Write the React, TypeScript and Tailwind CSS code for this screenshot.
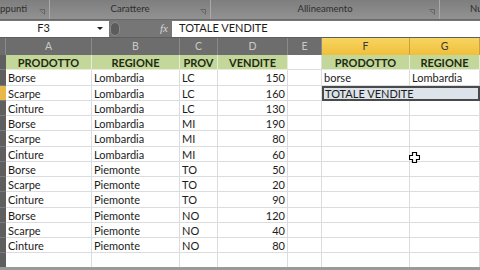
import React from 'react'

const rows: [string, string, string, number][] = [
  ['Borse', 'Lombardia', 'LC', 150],
  ['Scarpe', 'Lombardia', 'LC', 160],
  ['Cinture', 'Lombardia', 'LC', 130],
  ['Borse', 'Lombardia', 'MI', 190],
  ['Scarpe', 'Lombardia', 'MI', 80],
  ['Cinture', 'Lombardia', 'MI', 60],
  ['Borse', 'Piemonte', 'TO', 50],
  ['Scarpe', 'Piemonte', 'TO', 20],
  ['Cinture', 'Piemonte', 'TO', 90],
  ['Borse', 'Piemonte', 'NO', 120],
  ['Scarpe', 'Piemonte', 'NO', 40],
  ['Cinture', 'Piemonte', 'NO', 80],
]

const cols = 'grid grid-cols-[6px_86px_88px_38px_70px_34px_88px_70px]'
const cell = 'h-[15.25px] border-r border-b border-[#dadcdd] px-[2px] leading-[15px] whitespace-nowrap overflow-hidden'
const head = 'h-[15.25px] border-r border-b border-[#e6ecd8] bg-[#c4d79b] leading-[15px] font-bold text-center text-[#1e2a10] whitespace-nowrap overflow-hidden'

function Launcher() {
  return (
    <svg width="6" height="6" viewBox="0 0 6 6" className="opacity-70">
      <path d="M0.5 0.5h5v5" fill="none" stroke="#555" strokeWidth="1" />
      <path d="M1.5 1.5l3 3" stroke="#555" strokeWidth="1" />
    </svg>
  )
}

function RibbonGroup({ label, width, align = 'center' }: { label: string; width: number; align?: 'left' | 'center' }) {
  return (
    <div
      className="relative h-full flex items-center border-r border-[#a9a9a9] shrink-0"
      style={{ width }}
    >
      <span className={`flex-1 text-[9.5px] text-[#2e2e2e] ${align === 'left' ? 'text-left' : 'text-center'}`}>{label}</span>
      <span className="absolute right-[4px] bottom-[4px]">
        <Launcher />
      </span>
    </div>
  )
}

export default function App() {
  return (
    <div className="w-[480px] h-[270px] overflow-hidden bg-white flex flex-col" style={{ fontFamily: 'Lato, "Noto Sans", sans-serif' }}>
      {/* ribbon group labels */}
      <div className="h-[20px] shrink-0 flex bg-gradient-to-b from-[#7e7e7e] to-[#929292] border-b border-[#6a6a6a]">
        <RibbonGroup label="ppunti" width={50} align="left" />
        <RibbonGroup label="Carattere" width={161} />
        <RibbonGroup label="Allineamento" width={229} />
        <div className="flex-1 flex items-center pl-[30px] text-[9.5px] text-[#2e2e2e]">Nu</div>
      </div>

      {/* formula bar */}
      <div className="h-[18px] shrink-0 flex items-center bg-[#767676] border-b border-[#5e5e5e]">
        <div className="w-[109px] h-[16px] bg-white flex items-center relative">
          <span className="flex-1 text-center text-[11px] text-[#1a1a1a] pr-[22px]">F3</span>
          <span className="absolute right-[6px] top-[6px] w-0 h-0 border-l-[3px] border-r-[3px] border-t-[3px] border-l-transparent border-r-transparent border-t-[#222]" />
        </div>
        <div className="w-[10px] h-[14px] ml-[1px] rounded-full bg-[#5c5c5c] border border-[#8a8a8a]" />
        <div className="w-[52px] h-full flex items-center justify-end pr-[4px]">
          <span className="text-[11px] italic text-[#d8d8d8]" style={{ fontFamily: '"Liberation Serif", serif' }}>fx</span>
        </div>
        <div className="flex-1 h-[16px] bg-white flex items-center pl-[7px] text-[11px] text-[#1a1a1a]">TOTALE VENDITE</div>
      </div>

      {/* column header row */}
      <div className={`${cols} h-[17px] shrink-0 bg-[#6d6d6d] text-[10.5px] text-[#c9c9c9]`}>
        <div className="border-r border-[#8a8a8a]" />
        {['A', 'B', 'C', 'D', 'E'].map((l) => (
          <div key={l} className="border-r border-[#8a8a8a] flex items-center justify-center">{l}</div>
        ))}
        {['F', 'G'].map((l) => (
          <div key={l} className="border-r border-[#c9a23a] flex items-center justify-center bg-gradient-to-b from-[#f7d560] to-[#efbf3a] text-[#3a3a3a]">{l}</div>
        ))}
      </div>

      {/* sheet body */}
      <div className="flex-1 text-[11px] text-[#1c1c1c]">
        {/* header row */}
        <div className={cols}>
          <div className="h-[15.25px] bg-[#5f5f5f] border-b border-[#7a7a7a]" />
          {['PRODOTTO', 'REGIONE', 'PROV', 'VENDITE'].map((h) => (
            <div key={h} className={head}>{h}</div>
          ))}
          <div className={cell} />
          <div className={head}>PRODOTTO</div>
          <div className={head}>REGIONE</div>
        </div>

        {rows.map((r, i) => (
          <div key={i} className={cols}>
            <div className={`h-[15.25px] border-b border-[#7a7a7a] ${i === 1 ? 'bg-[#e8b84a]' : 'bg-[#5f5f5f]'}`} />
            <div className={cell}>{r[0]}</div>
            <div className={cell}>{r[1]}</div>
            <div className={cell}>{r[2]}</div>
            <div className={`${cell} text-right`}>{r[3]}</div>
            <div className={cell} />
            {i === 0 && (
              <>
                <div className={cell}>borse</div>
                <div className={cell}>Lombardia</div>
              </>
            )}
            {i === 1 && (
              <div className="col-span-2 h-[15.25px] bg-[#dce3ea] border-2 border-[#4a4a4a] px-[1px] leading-[12px] whitespace-nowrap">TOTALE VENDITE</div>
            )}
            {i > 1 && (
              <>
                <div className={cell} />
                <div className={`${cell} relative overflow-visible`}>
                  {i === 5 && (
                    <svg className="absolute left-[-1px] top-[5px]" width="11" height="11" viewBox="0 0 11 11">
                      <path d="M3.5 0.5h4v3h3v4h-3v3h-4v-3h-3v-4h3z" fill="#fff" stroke="#000" strokeWidth="1.2" />
                    </svg>
                  )}
                </div>
              </>
            )}
          </div>
        ))}

        <div className={cols}>
          <div className="h-[14px] bg-[#5f5f5f]" />
          {[0, 1, 2, 3, 4, 5, 6].map((k) => (
            <div key={k} className="h-[14px] border-r border-[#dadcdd]" />
          ))}
        </div>
        <div className="h-[4px] bg-[#9a9a9a]" />
      </div>
    </div>
  )
}
